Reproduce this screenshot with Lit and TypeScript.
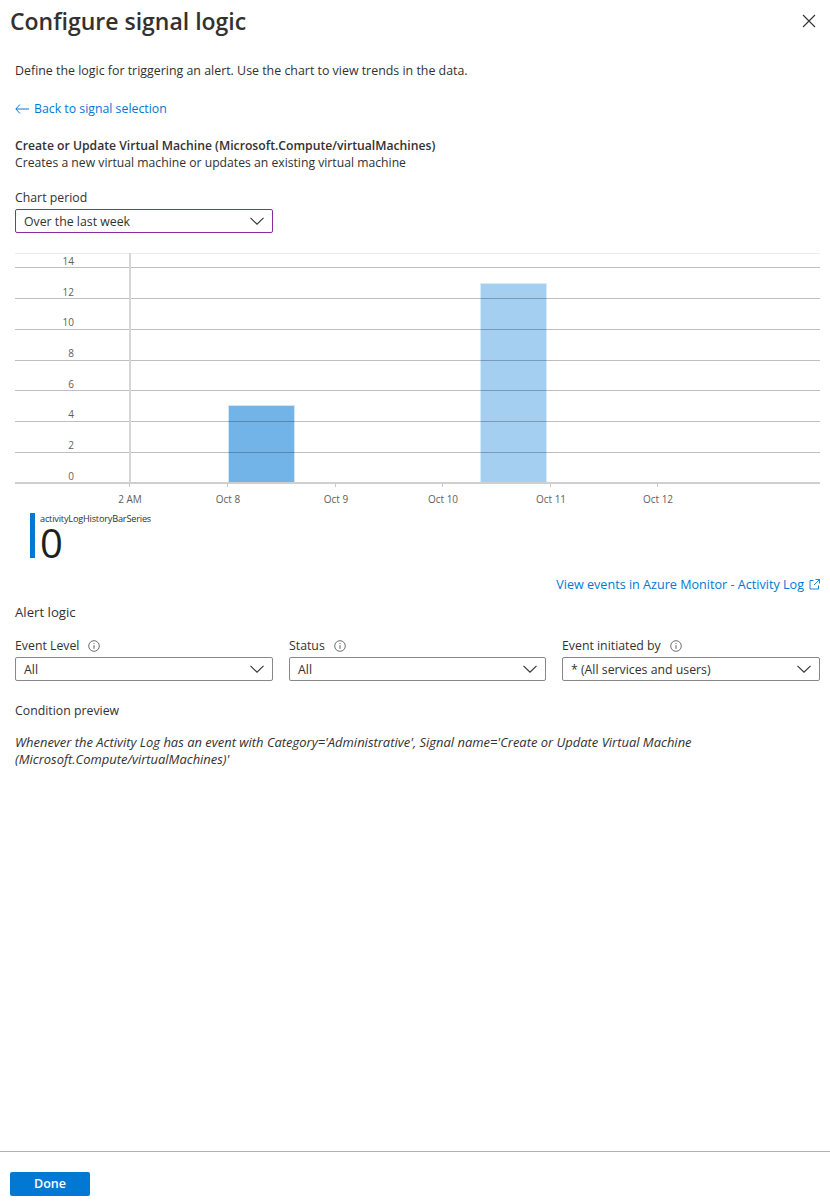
import { LitElement, html, css, svg } from 'lit';
import { customElement } from 'lit/decorators.js';

const gridLines = [267, 298, 329, 360, 390, 421, 452];
const yLabels = [
  { text: '14', y: 265 },
  { text: '12', y: 296 },
  { text: '10', y: 326 },
  { text: '8', y: 357 },
  { text: '6', y: 388 },
  { text: '4', y: 418 },
  { text: '2', y: 449 },
  { text: '0', y: 480 },
];
const xLabels = [
  { text: '2 AM', x: 130 },
  { text: 'Oct 8', x: 228 },
  { text: 'Oct 9', x: 336 },
  { text: 'Oct 10', x: 443 },
  { text: 'Oct 11', x: 551 },
  { text: 'Oct 12', x: 658 },
];

const chevron = html`<svg class="chev" width="16" height="16" viewBox="0 0 16 16"><path d="M1.5 4.8 8 11.2l6.5-6.4" fill="none" stroke="#323130" stroke-width="1.1"/></svg>`;
const info = html`<svg class="info" width="12" height="12" viewBox="0 0 12 12"><circle cx="6" cy="6" r="5.3" fill="none" stroke="#605e5c" stroke-width="0.9"/><path d="M6 5.2v3.6" stroke="#605e5c" stroke-width="1"/><circle cx="6" cy="3.5" r="0.6" fill="#605e5c"/></svg>`;

@customElement('app-root')
export class AppRoot extends LitElement {
  static styles = css`
    :host {
      display: flex;
      flex-direction: column;
      height: 1204px;
      font-family: 'Open Sans', 'Noto Sans', sans-serif;
      font-size: 12.3px;
      line-height: 17px;
      color: #323130;
      background: #fff;
      overflow: hidden;
    }
    .head {
      display: flex;
      justify-content: space-between;
      padding: 5px 14px 0 10px;
      height: 38px;
      box-sizing: border-box;
    }
    h1 {
      margin: 0;
      font-size: 23px;
      line-height: 32px;
      font-weight: 600;
    }
    .close { margin-top: 9px; }
    .body {
      flex: 1;
      padding: 0 10px 0 15px;
    }
    .intro { margin: 24px 0 0; font-size: 12.4px; }
    .back {
      display: flex;
      align-items: center;
      gap: 5px;
      margin-top: 21px;
      color: #0078d4;
    }
    .signal { margin-top: 20px; font-size: 12.2px; }
    .signal b { display: block; font-weight: 600; }
    .field-label {
      display: flex;
      align-items: center;
      gap: 9px;
      height: 17px;
      margin-bottom: 3px;
    }
    .period { margin-top: 18px; width: 258px; }
    .select {
      display: flex;
      align-items: center;
      justify-content: space-between;
      box-sizing: border-box;
      height: 24px;
      padding: 0 7px 0 8px;
      border: 1px solid #8a8886;
      border-radius: 2px;
    }
    .select.focus { border-color: #8a2da5; }
    .chart { display: block; margin: 0 0 0 -15px; }
    .legend {
      display: flex;
      margin: 8px 0 0 15px;
      height: 45px;
      border-left: 5px solid #0078d4;
      padding-left: 5px;
      flex-direction: column;
    }
    .legend small {
      font-size: 9.2px;
      line-height: 12px;
      letter-spacing: -0.2px;
    }
    .legend strong {
      font-size: 40px;
      line-height: 36px;
      font-weight: 500;
      color: #201f1e;
    }
    .monitor {
      display: flex;
      justify-content: flex-end;
      align-items: center;
      gap: 5px;
      margin-top: 18px;
      font-size: 12.6px;
      color: #0078d4;
    }
    .section { margin-top: 11px; font-size: 13.2px; }
    .filters {
      display: grid;
      grid-template-columns: 258px 257px 258px;
      column-gap: 16px;
      margin-top: 16px;
    }
    .preview { margin-top: 21px; }
    .condition {
      margin: 15px 0 0;
      font-size: 12.96px;
      font-style: italic;
      width: 760px;
    }
    .foot {
      height: 53px;
      box-sizing: border-box;
      border-top: 1px solid #b3b0ad;
      padding: 20px 0 0 10px;
    }
    .done {
      width: 80px;
      height: 24px;
      border: 0;
      border-radius: 2px;
      padding: 0 0 2px;
      background: #0078d4;
      color: #fff;
      font: 600 12.5px 'Open Sans', 'Noto Sans', sans-serif;
    }
    svg { flex: none; }
    .axis { font-size: 10px; fill: #605e5c; }
  `;

  private renderChart() {
    return html`<svg class="chart" width="830" height="272" viewBox="0 233 830 272">
      <rect x="228.500" y="405.500" width="66" height="78" fill="#73b4e8" stroke="#d3e6f6"/>
      <rect x="480.500" y="283.500" width="66" height="200" fill="#a5cff1" stroke="#d8eaf9"/>
      <line x1="15" x2="820" y1="253.500" y2="253.500" stroke="#ececec"/>
      ${gridLines.map(
        (y) => svg`<line x1="15" x2="820" y1=${y + 0.5} y2=${y + 0.5} stroke="#000" stroke-opacity="0.25"/>`
      )}
      <line x1="130" x2="130" y1="253" y2="483" stroke="#d6d6d6" stroke-width="2"/>
      <line x1="15" x2="820" y1="483" y2="483" stroke="#cfcfcf" stroke-width="2"/>
      ${yLabels.map(
        (l) => svg`<text class="axis" x="74" y=${l.y} text-anchor="end">${l.text}</text>`
      )}
      ${xLabels.map(
        (l) => svg`
          <line x1=${l.x - 0.5} x2=${l.x - 0.5} y1="484" y2="487" stroke="#c8c8c8"/>
          <text class="axis" x=${l.x} y="503" text-anchor="middle">${l.text}</text>`
      )}
    </svg>`;
  }

  private renderFilter(label: string, value: string) {
    return html`<div>
      <div class="field-label">${label} ${info}</div>
      <div class="select"><span>${value}</span>${chevron}</div>
    </div>`;
  }

  render() {
    return html`
      <div class="head">
        <h1>Configure signal logic</h1>
        <svg class="close" width="14" height="14" viewBox="0 0 14 14"><path d="M1 1l12 12M13 1 1 13" stroke="#323130" stroke-width="1.1" fill="none"/></svg>
      </div>
      <div class="body">
        <p class="intro">Define the logic for triggering an alert. Use the chart to view trends in the data.</p>
        <div class="back">
          <svg width="14" height="10" viewBox="0 0 14 10"><path d="M5 .5.8 5 5 9.500M1 5h13" fill="none" stroke="#0078d4"/></svg>
          <span>Back to signal selection</span>
        </div>
        <div class="signal">
          <b>Create or Update Virtual Machine (Microsoft.Compute/virtualMachines)</b>
          Creates a new virtual machine or updates an existing virtual machine
        </div>
        <div class="period">
          <div class="field-label">Chart period</div>
          <div class="select focus"><span>Over the last week</span>${chevron}</div>
        </div>
        ${this.renderChart()}
        <div class="legend"><small>activityLogHistoryBarSeries</small><strong>0</strong></div>
        <div class="monitor">
          <span>View events in Azure Monitor - Activity Log</span>
          <svg width="11" height="11" viewBox="0 0 11 11"><path d="M4.500 1.500H1v8.500h8.500V6.500M6.500.5h4v4M10.500.5 5 6" fill="none" stroke="#0078d4" stroke-width="0.9"/></svg>
        </div>
        <div class="section">Alert logic</div>
        <div class="filters">
          ${this.renderFilter('Event Level', 'All')}
          ${this.renderFilter('Status', 'All')}
          ${this.renderFilter('Event initiated by', '* (All services and users)')}
        </div>
        <div class="preview">Condition preview</div>
        <p class="condition">Whenever the Activity Log has an event with Category='Administrative', Signal name='Create or Update Virtual Machine (Microsoft.Compute/virtualMachines)'</p>
      </div>
      <div class="foot"><button class="done">Done</button></div>
    `;
  }
}
